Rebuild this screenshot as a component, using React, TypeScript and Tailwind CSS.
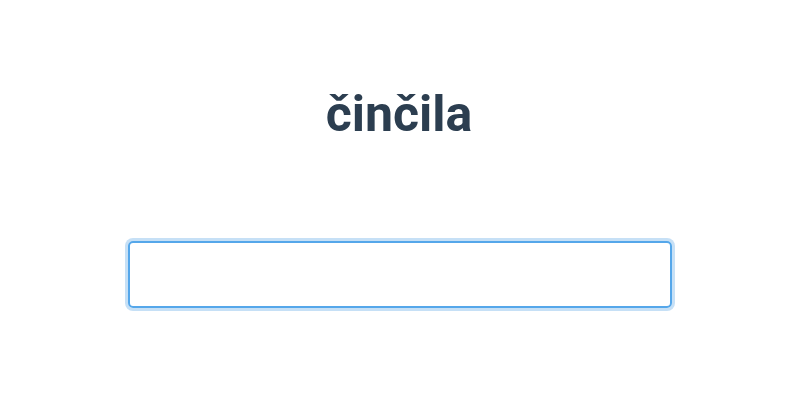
import React from 'react';

const App: React.FC = () => {
  return (
    <div className="w-[800px] h-[400px] bg-white flex flex-col items-center" style={{ fontFamily: 'Roboto, "Noto Sans", sans-serif' }}>
      <h1 className="mt-[84px] text-[50px] leading-[60px] font-bold text-[#2c3e50] -translate-x-[1px]">činčila</h1>
      <input
        type="text"
        autoFocus
        className="mt-[97px] w-[544px] h-[67px] rounded-[5px] border-2 border-[#55a7ea] outline-none ring-[3px] ring-[#c6e0f6] px-3 text-[20px] text-[#2c3e50]"
      />
    </div>
  );
};

export default App;
